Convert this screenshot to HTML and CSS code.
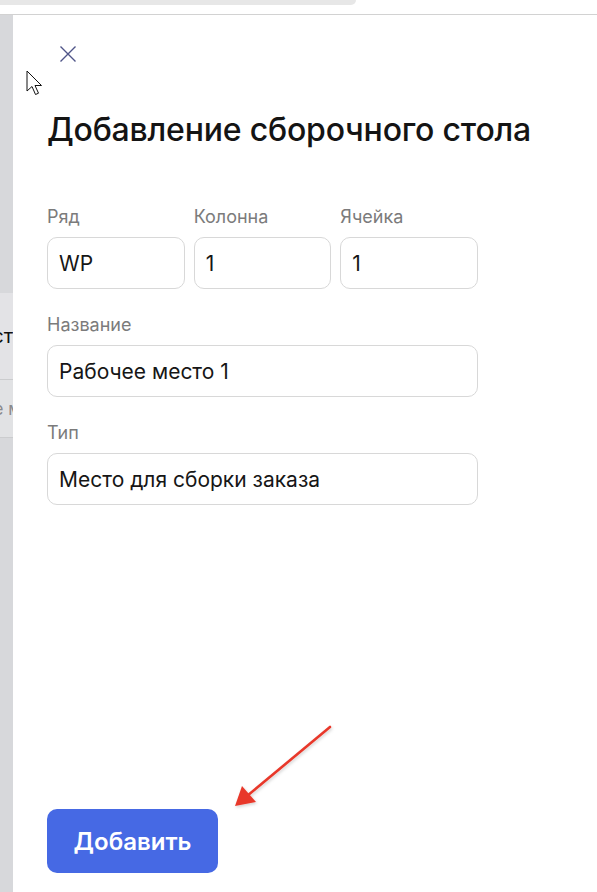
FILE: index.html
```html
<!DOCTYPE html>
<html lang="ru">
<head>
    <meta charset="UTF-8">
    <meta name="viewport" content="width=device-width, initial-scale=1.0">
    <title>Добавление сборочного стола</title>
    <link rel="stylesheet" href="styles.css">
</head>

<body>
    <div class="topbar">
        <div class="tabstrip"></div>
    </div>

    <div class="screen">
        <!-- page behind the drawer, mostly covered -->
        <aside class="backdrop">
            <div class="bg-row bg-head"><span>Лист</span></div>
            <div class="bg-row bg-sub"><span class="cut-left">Рабочее место</span></div>
        </aside>

        <main class="drawer">
            <button class="close" aria-label="Закрыть">
                <svg width="18" height="18" viewBox="0 0 18 18">
                    <path d="M1.5 1.5 L16.5 16.5 M16.5 1.5 L1.5 16.5" stroke="#4f5588" stroke-width="1.4" fill="none"/>
                </svg>
            </button>

            <h1 class="title">Добавление сборочного стола</h1>

            <form class="form">
                <div class="row3">
                    <label class="field">
                        <span class="label">Ряд</span>
                        <input class="input" type="text" value="WP">
                    </label>
                    <label class="field">
                        <span class="label">Колонна</span>
                        <input class="input" type="text" value="1">
                    </label>
                    <label class="field">
                        <span class="label">Ячейка</span>
                        <input class="input" type="text" value="1">
                    </label>
                </div>
                <label class="field">
                    <span class="label">Название</span>
                    <input class="input" type="text" value="Рабочее место 1">
                </label>
                <label class="field">
                    <span class="label">Тип</span>
                    <input class="input" type="text" value="Место для сборки заказа">
                </label>
            </form>

            <div class="actions">
                <button class="submit" type="button">Добавить</button>
            </div>
        </main>
    </div>

    <!-- mouse pointer -->
    <svg class="pointer" width="18" height="28" viewBox="0 0 18 28">
        <path d="M1 1 L1 21 L6 16.5 L9.5 24.5 L12.5 23.2 L9 15.5 L15.5 15.5 Z" fill="#fff" stroke="#111" stroke-width="1" stroke-linejoin="miter"/>
    </svg>

    <!-- red annotation arrow -->
    <svg class="arrow" width="110" height="95" viewBox="0 0 110 95">
        <defs>
            <filter id="soft" x="-20%" y="-20%" width="140%" height="140%">
                <feDropShadow dx="1" dy="1.5" stdDeviation="1.5" flood-color="#000" flood-opacity="0.18"/>
            </filter>
        </defs>
        <g filter="url(#soft)">
            <path d="M101 4 L18 73" stroke="#e8392c" stroke-width="2.6" stroke-linecap="round" fill="none"/>
            <path d="M6 83 L13 63 L27 79 Z" fill="#e8392c"/>
        </g>
    </svg>
</body>
</html>
```

FILE: styles.css
```css
*{
    margin: 0;
    padding: 0;
    box-sizing: border-box;
}
body{
    height: 100vh;
    display: flex;
    flex-direction: column;
    font-family: Inter, "Noto Sans", sans-serif;
    background-color: #fff;
    overflow: hidden;
    position: relative;
}
.topbar{
    height: 15px;
    border-bottom: 1px solid #d2d2d2;
    flex: none;
}
.tabstrip{
    width: 356px;
    height: 5px;
    background-color: #e7e7e7;
    border-bottom-right-radius: 8px;
}
.screen{
    flex: 1;
    display: flex;
    min-height: 0;
}
.backdrop{
    width: 13px;
    flex: none;
    background-color: #d7d8db;
    display: flex;
    flex-direction: column;
    padding-top: 278px;
    overflow: hidden;
}
.bg-row{
    white-space: nowrap;
    overflow: hidden;
    display: flex;
    align-items: center;
}
.bg-head{
    height: 87px;
    background-color: #e3e3e6;
    border-bottom: 1px solid #cbccce;
    justify-content: flex-end;
    font-size: 20px;
    color: #111;
}
.bg-sub{
    height: 58px;
    background-color: #e1e2e4;
    border-bottom: 1px solid #cbccce;
    font-size: 17px;
    color: #8a8a8c;
}
.cut-left{
    margin-left: -67px;
}
.drawer{
    flex: 1;
    display: flex;
    flex-direction: column;
    padding: 0 0 19px 34px;
}
.close{
    width: 18px;
    height: 18px;
    margin: 30px 0 0 12px;
    background: none;
    border: none;
    display: flex;
}
.title{
    margin-top: 47px;
    font-size: 32px;
    font-weight: 500;
    color: #141414;
    letter-spacing: -0.2px;
    line-height: 40px;
}
.form{
    margin-top: 56px;
    width: 431px;
    display: flex;
    flex-direction: column;
    gap: 25px;
}
.row3{
    display: grid;
    grid-template-columns: repeat(3, 1fr);
    gap: 9px;
}
.field{
    display: flex;
    flex-direction: column;
    gap: 9px;
}
.label{
    font-size: 18px;
    color: #7b7b7b;
    line-height: 22px;
}
.input{
    height: 52px;
    width: 100%;
    border: 1px solid #d8d8d8;
    border-radius: 10px;
    padding: 0 11px;
    font-family: inherit;
    font-size: 21px;
    color: #161616;
    background-color: #fff;
    outline: none;
}
.actions{
    margin-top: auto;
}
.submit{
    width: 171px;
    height: 64px;
    border: none;
    border-radius: 10px;
    background-color: #4669e4;
    color: #fff;
    font-family: inherit;
    font-size: 24px;
    font-weight: 600;
    cursor: pointer;
}
.pointer{
    position: absolute;
    left: 26px;
    top: 70px;
}
.arrow{
    position: absolute;
    left: 229px;
    top: 723px;
}
```
